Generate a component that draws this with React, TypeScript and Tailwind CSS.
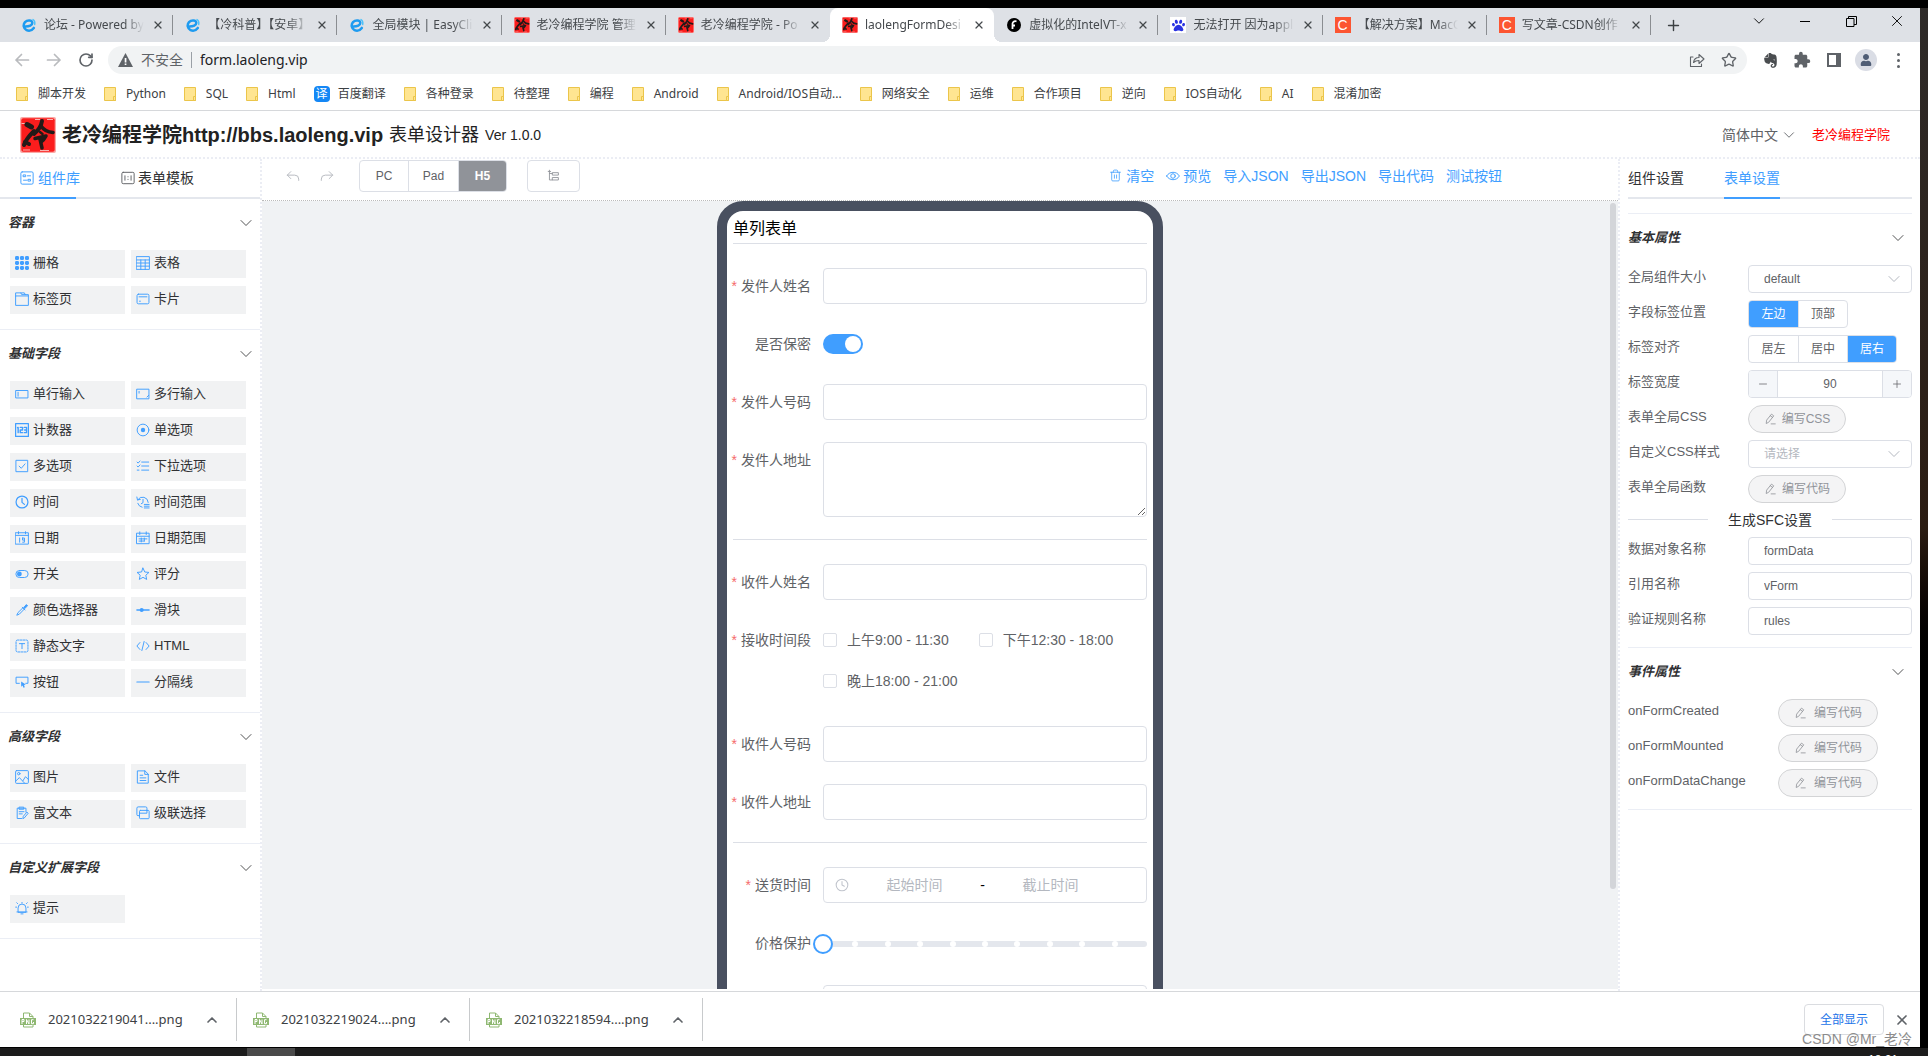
import React from 'react';
import {
  ChevronDown,
  ChevronUp,
  X,
  Plus,
  Minus,
  RotateCw,
  Star,
  Clock,
  Trash2,
} from 'lucide-react';
import { FaUser, FaEvernote, FaPaw } from 'react-icons/fa';
import { MdExtension } from 'react-icons/md';

// ==========================================
// ICONS
// ==========================================
const Svg = ({ size = 14, className = '', children }: { size?: number; className?: string; children: React.ReactNode }) => (
  <svg
    width={size}
    height={size}
    viewBox="0 0 16 16"
    fill="none"
    stroke="currentColor"
    strokeWidth="1.1"
    strokeLinecap="round"
    strokeLinejoin="round"
    className={`shrink-0 ${className}`}
    aria-hidden="true"
  >
    {children}
  </svg>
);

const widgetIcons: Record<string, React.ReactNode> = {
  grid: (
    <g fill="currentColor" stroke="none">
      {[0, 5.7, 11.4].map((y) =>
        [0, 5.7, 11.4].map((x) => <rect key={`${x}-${y}`} x={x} y={y} width="4.6" height="4.6" rx="1.6" />)
      )}
    </g>
  ),
  table: <path d="M.7.7h14.6v14.6H.7zM.7 4.5h14.6M.7 8h14.6M.7 11.6h14.6M5.5 4.5v10.8M10.5 4.5v10.8" />,
  tab: <path d="M.7 4.5V1h6l1 2h7.6v12.3H.7V4.5h14.6M6.7 1h4l1 2" />,
  card: (
    <>
      <rect x="1.2" y="2.5" width="13.6" height="11" rx="1.5" />
      <path d="M3.5 5.5h9M4 10.5h1" />
    </>
  ),
  input: <path d="M1.2 4h13.6v8.5H1.2zM3.5 6v4.5" />,
  textarea: <path d="M1.2 2.5h13.6v11H1.2zM3.5 5v2M12.5 11.5l2-2" />,
  number: (
    <>
      <path d="M.7.7h14.6v14.6H.7z" strokeWidth="1.4" />
      <path d="M3.6 5v6M2.9 5.4l.7-.4M6 5h2.6v3H6v3h2.6M10.6 5h2.6v6h-2.6M11 8h2" strokeWidth="1.6" />
    </>
  ),
  radio: (
    <>
      <circle cx="8" cy="8" r="6.7" />
      <circle cx="8" cy="8" r="2.5" fill="currentColor" stroke="none" />
    </>
  ),
  checkbox: <path d="M1.5 1.5h13v13h-13zM4.7 8.2l2.5 2.4 4.3-5" />,
  select: <path d="M6.5 3.5h8M6.5 8h8M6.5 12.7h8M1.2 3.5l1.2 1.2 2.2-2.4M1.2 8l1.2 1.2 2.2-2.4M1.4 12.7h2" />,
  time: (
    <>
      <circle cx="8" cy="8" r="6.8" strokeWidth="1.4" />
      <path d="M8 3.8V8.4l2.8 2.3" strokeWidth="1.4" />
    </>
  ),
  timeRange: <path d="M2 5.5A6.5 6.5 0 0 1 14 8.5M1 2.3l.7 3.4L5 5M2 9.5A6.5 6.5 0 0 0 7 14M8 5v3.8L6 10M9.5 10.8h5.5M9.5 12.8h5.5M9.5 14.8h5.5" />,
  date: <path d="M.7 2h14.6v13H.7zM.7 5h14.6M4 .8v2.4M12 .8v2.4M5.3 8v4.8M8.6 8h2.2v4.8H8.8M8.6 8v2.4h2.2" />,
  dateRange: <path d="M1 2.5h14v12H1zM1 6h14M4.3 1v3M11.7 1v3M3.5 9h9M3.5 11.5h6M6 8v4.5M9.5 8v3.5" />,
  switch: (
    <>
      <rect x="1" y="4" width="14" height="8" rx="4" />
      <circle cx="5" cy="8" r="2.8" fill="currentColor" stroke="none" />
    </>
  ),
  rate: <path d="M8 1.3l2 4.4 4.8.5-3.6 3.2 1 4.8L8 11.8l-4.2 2.4 1-4.8L1.2 6.2 6 5.7z" />,
  color: (
    <>
      <path d="M9 5.5L3.4 11 2 14l3-1.3L10.6 7" />
      <path d="M8.3 4.8l3.2 3.2M10 5.2l3-3.4 1.4 1.4L11 6.4z" fill="currentColor" />
    </>
  ),
  slider: (
    <>
      <path d="M1 8h14" strokeWidth="1.5" />
      <circle cx="6.5" cy="8" r="2.3" fill="currentColor" stroke="none" />
    </>
  ),
  text: (
    <>
      <rect x="1.2" y="1.2" width="13.6" height="13.6" rx="1.5" strokeDasharray="2 1.3" />
      <path d="M5 5.3h6M8 5.3V11" />
    </>
  ),
  html: <path d="M4.5 4L1 8l3.5 4M11.5 4L15 8l-3.5 4M9.3 2.8L6.7 13.2" />,
  button: (
    <>
      <path d="M5 9.5H1.2v-7h13.6v7h-2.5" />
      <path d="M7 7.5l5.3 3.3-2 .6.9 2.6-1.5.6-1-2.6-1.6 1.3z" fill="currentColor" stroke="none" />
    </>
  ),
  divider: <path d="M1 8h14" strokeWidth="1.3" />,
  picture: (
    <>
      <rect x=".7" y=".7" width="14.6" height="14.6" rx="1" />
      <circle cx="4.3" cy="4.2" r="1.4" />
      <path d="M1 12.5l4-3.8 3.8 4L12 7.6l3.3 3.3M9 13l2 2" />
    </>
  ),
  file: <path d="M2 1h8.3L14 4.7V15H2zM10 1v4h4M4.7 6h3M4.7 9h6.6M4.7 12h6.6" />,
  rich: <path d="M12.5 7V2.5h-10v11.8h5M5 1.3h5v2.4H5zM4.8 6.5h5.5M4.8 9h3.5M9 14l.5-2.3L13.6 7l1.5 1.3-4.2 5z" />,
  cascade: (
    <>
      <path d="M4 11H2.2A1.2 1.2 0 0 1 1 9.8V2.5A1.5 1.5 0 0 1 2.5 1h8.5A1.5 1.5 0 0 1 12.5 2.5V5" />
      <rect x="4" y="5" width="11" height="9.5" rx="1" />
      <path d="M4 8.2h8.5V5" />
    </>
  ),
  alert: <path d="M3.5 12.5V8a4.5 4.5 0 0 1 9 0v4.5zM2.2 12.5h11.6M6.8 14.7h2.4M8 1.6v.8M.8 7h1M14.2 7h1M2 2l1 1M14 2l-1 1" />,
};

const PenIcon = () => (
  <Svg size={12}>
    <path d="M3 13.5l.5-4L10 1.5l3 2.3-6.5 8.2zM8.3 3.5l3 2.3M9.5 14.5h5.5" />
  </Svg>
);

const SealIcon = ({ size = 16 }: { size?: number }) => (
  <svg width={size} height={size} viewBox="0 0 36 36" aria-hidden="true" className="shrink-0">
    <rect width="36" height="36" rx="2" fill="#f9a9a6" />
    <rect x="1.3" y="1.3" width="33.4" height="33.4" rx="2" fill="#fb1d1d" />
    <path d="M1.5 6.5h5M15 2.5h5M27 2.5h6M3 33h7M20 33.5h9" stroke="#f9b5b2" strokeWidth="1" />
    <g stroke="#241a18" fill="none" strokeLinecap="round" strokeLinejoin="round">
      <path d="M7 7.5l4.5 2.5" strokeWidth="5" />
      <path d="M4 28Q6 22 14 14" strokeWidth="4" />
      <path d="M5 25l4 2" strokeWidth="4" />
      <path d="M22 4Q21 11 14 17" strokeWidth="4" />
      <path d="M21 9q4 6 12 6.5" strokeWidth="3.5" />
      <path d="M20 15l2.500 2" strokeWidth="2.500" />
      <path d="M15 21.500l11-2.500q-2 4-5 6" strokeWidth="3.500" />
      <path d="M20 22l2 9" strokeWidth="3.500" />
    </g>
  </svg>
);

const SwirlIcon = () => (
  <svg width="16" height="16" viewBox="0 0 16 16" fill="none" strokeLinecap="round" aria-hidden="true" className="shrink-0">
    <path d="M4.5 9.5C8 9.5 11.5 8.3 11.3 5.7 11 3 6.5 2.5 4 5.2c-2.2 2.4-1.5 6.600 1.500 7.900 2.700 1.100 5.700 0 7.300-2.200" stroke="#1e9bf0" strokeWidth="2.5" />
    <path d="M12 2.500c1.500 1 2.200 3 1.700 5" stroke="#4dc3fa" strokeWidth="1.4" />
  </svg>
);

const TabIcon = ({ kind }: { kind: string }) => {
  if (kind === 'swirl') return <SwirlIcon />;
  if (kind === 'seal') return <SealIcon />;
  if (kind === 'baidu')
    return (
      <span className="flex size-4 shrink-0 items-center justify-center bg-white text-[#2932e1]">
        <FaPaw size={13} />
      </span>
    );
  if (kind === 'csdn')
    return (
      <span className="flex size-4 shrink-0 items-center justify-center bg-[#fc5531] font-['Liberation_Sans'] text-sm leading-4 text-white">C</span>
    );
  return (
    <svg width="16" height="16" viewBox="0 0 16 16" className="shrink-0" aria-hidden="true">
      <circle cx="8" cy="8" r="7" fill="#000" />
      <path d="M6.500 12V8.500H9M6.500 8.500C6 5 8 3.800 10.500 4.300" stroke="#fff" strokeWidth="1.8" fill="none" />
    </svg>
  );
};

const FolderIcon = () => (
  <svg width="12" height="14" viewBox="0 0 12 14" aria-hidden="true" className="shrink-0">
    <path d="M.5.5h11v13H.5z" fill="#ffe591" stroke="#ebc54a" />
    <path d="M9.5 9.5h2v4h-2z" fill="#ffe591" stroke="#ebc54a" />
  </svg>
);

// ==========================================
// DATA
// ==========================================
const browserTabs = [
  { title: '论坛 - Powered by', icon: 'swirl' },
  { title: '【冷科普】【安卓】', icon: 'swirl' },
  { title: '全局模块 | EasyClic', icon: 'swirl' },
  { title: '老冷编程学院 管理', icon: 'seal' },
  { title: '老冷编程学院 - Po', icon: 'seal' },
  { title: 'laolengFormDesi', icon: 'seal', active: true },
  { title: '虚拟化的IntelVT-x', icon: 'disc' },
  { title: '无法打开 因为appl', icon: 'baidu' },
  { title: '【解决方案】MacO', icon: 'csdn' },
  { title: '写文章-CSDN创作', icon: 'csdn' },
];

const bookmarks = [
  '脚本开发', 'Python', 'SQL', 'Html', '百度翻译', '各种登录', '待整理', '编程', 'Android',
  'Android/IOS自动...', '网络安全', '运维', '合作项目', '逆向', 'IOS自动化', 'AI', '混淆加密',
];

const widgetGroups: { title: string; items: [string, string][] }[] = [
  { title: '容器', items: [['grid', '栅格'], ['table', '表格'], ['tab', '标签页'], ['card', '卡片']] },
  {
    title: '基础字段',
    items: [
      ['input', '单行输入'], ['textarea', '多行输入'],
      ['number', '计数器'], ['radio', '单选项'],
      ['checkbox', '多选项'], ['select', '下拉选项'],
      ['time', '时间'], ['timeRange', '时间范围'],
      ['date', '日期'], ['dateRange', '日期范围'],
      ['switch', '开关'], ['rate', '评分'],
      ['color', '颜色选择器'], ['slider', '滑块'],
      ['text', '静态文字'], ['html', 'HTML'],
      ['button', '按钮'], ['divider', '分隔线'],
    ],
  },
  { title: '高级字段', items: [['picture', '图片'], ['file', '文件'], ['rich', '富文本'], ['cascade', '级联选择']] },
  { title: '自定义扩展字段', items: [['alert', '提示']] },
];

const downloads = ['2021032219041....png', '2021032219024....png', '2021032218594....png'];

// ==========================================
// BROWSER CHROME
// ==========================================
function TabStrip() {
  return (
    <div className="flex h-[34px] items-stretch bg-[#dee1e6] pl-[9px] text-xs text-[#45494d]">
      <div className="flex w-[1642px] min-w-0">
        {browserTabs.map((tab, i) => {
          const bare = tab.active || browserTabs[i + 1]?.active;
          return (
            <div
              key={tab.title}
              className={
                tab.active
                  ? 'relative flex min-w-0 flex-1 items-center rounded-t-lg bg-white pl-3 before:absolute before:bottom-0 before:-left-2 before:size-2 before:bg-[radial-gradient(circle_at_0_0,transparent_8px,white_8px)] after:absolute after:-right-2 after:bottom-0 after:size-2 after:bg-[radial-gradient(circle_at_100%_0,transparent_8px,white_8px)]'
                  : 'flex min-w-0 flex-1 items-center pl-3'
              }
            >
              <TabIcon kind={tab.icon} />
              <span className="ml-[7px] min-w-0 flex-1 whitespace-nowrap [mask-image:linear-gradient(to_right,black_80%,transparent)]">
                {tab.title}
              </span>
              <button aria-label="关闭标签页" className="ml-1.5 flex w-4 justify-center">
                <X size={12} strokeWidth={2.5} />
              </button>
              <span className={bare ? 'ml-1.5 w-px' : 'ml-1.5 h-5 w-px bg-[#8a8d91]'} />
            </div>
          );
        })}
      </div>
      <button aria-label="新标签页" className="ml-3.5 flex items-center text-[#3c4043]">
        <Plus size={17} strokeWidth={2} />
      </button>
      <div className="ml-auto flex w-[184px] items-center pb-2 text-black">
        <button aria-label="搜索标签页" className="flex flex-1 justify-center"><ChevronDown size={18} strokeWidth={1.2} /></button>
        <button aria-label="最小化" className="flex flex-1 justify-center"><span className="h-px w-2.5 bg-black" /></button>
        <button aria-label="还原" className="flex flex-1 justify-center">
          <svg width="11" height="11" viewBox="0 0 11 11" fill="none" stroke="currentColor"><path d="M.5 2.5h7.5v8H.5zM2.5 2.5v-2h8v8H8" /></svg>
        </button>
        <button aria-label="关闭" className="flex flex-1 justify-center"><X size={18} strokeWidth={1.2} /></button>
      </div>
    </div>
  );
}

const ToolCell = ({ children }: { children: React.ReactNode }) => (
  <span className="flex w-8 items-center justify-center">{children}</span>
);

function AddressBar() {
  return (
    <div className="flex h-9 items-center bg-white pr-1.5 pl-3.5 text-[#5f6368]">
      <button aria-label="后退" className="w-8 text-[#b9bbbe]">
        <Svg size={16}><path d="M14.5 8H2M7.5 2.5L2 8l5.5 5.5" strokeWidth="1.7" /></Svg>
      </button>
      <button aria-label="前进" className="w-8 text-[#b9bbbe]">
        <Svg size={16}><path d="M1.5 8H14M8.5 2.5L14 8l-5.5 5.5" strokeWidth="1.7" /></Svg>
      </button>
      <button aria-label="重新加载" className="w-[30px]"><RotateCw size={16} strokeWidth={2.5} /></button>
      <div className="flex h-7 flex-1 items-center rounded-full bg-[#f1f3f4] pr-2.5 pl-2.5 text-sm">
        <svg width="15" height="14" viewBox="0 0 15 14" aria-hidden="true">
          <path d="M7.5 0L15 14H0z" fill="#5f6368" />
          <path d="M6.7 5h1.7v4.5H6.7zM6.7 10.5h1.7v1.6H6.7z" fill="#fff" />
        </svg>
        <span className="ml-2">不安全</span>
        <span className="mx-2 h-4 w-px bg-[#9aa0a6]" />
        <input aria-label="地址" defaultValue="form.laoleng.vip" className="flex-1 bg-transparent text-[#202124] outline-none" />
        <button aria-label="分享" className="mr-4">
          <Svg size={16}><path d="M4 5H1.5v9.5h11V12M4.5 10.5C5 7 7 5.500 10 5.500V2.500l5 4.500-5 4.500V8.500C7.500 8.500 6 9 4.500 10.500z" /></Svg>
        </button>
        <button aria-label="收藏"><Star size={16} /></button>
      </div>
      <div className="ml-[7px] flex items-center">
        <ToolCell><FaEvernote size={17} className="text-[#4a4d50]" /></ToolCell>
        <ToolCell><MdExtension size={18} /></ToolCell>
        <ToolCell>
          <svg width="16" height="16" viewBox="0 0 16 16" aria-hidden="true"><path d="M2 2h12v12H2z" fill="none" stroke="currentColor" strokeWidth="2" /><path d="M10 2h5v12h-5z" fill="currentColor" /></svg>
        </ToolCell>
        <ToolCell>
          <span className="flex size-[22px] items-center justify-center rounded-full bg-[#dadde5] text-[#4f5d75]"><FaUser size={12} /></span>
        </ToolCell>
        <button aria-label="菜单" className="flex w-8 flex-col items-center gap-[3px]">
          <span className="size-[3px] rounded-full bg-[#5f6368]" />
          <span className="size-[3px] rounded-full bg-[#5f6368]" />
          <span className="size-[3px] rounded-full bg-[#5f6368]" />
        </button>
      </div>
    </div>
  );
}

function BookmarkBar() {
  return (
    <nav className="flex h-[33px] items-center gap-[18px] border-b border-[#d6d8db] bg-white pb-px pl-4 text-xs text-[#3c4043]">
      {bookmarks.map((name) =>
        name === '百度翻译' ? (
          <a key={name} href="#" className="flex items-center gap-2 whitespace-nowrap">
            <span className="flex size-4 items-center justify-center rounded-sm bg-[#1487f5] leading-4 text-white">译</span>
            {name}
          </a>
        ) : (
          <a key={name} href="#" className="flex items-center gap-2.5 whitespace-nowrap">
            <FolderIcon />
            {name}
          </a>
        )
      )}
    </nav>
  );
}

function DownloadBar() {
  return (
    <div className="flex h-14 shrink-0 items-center border-t border-[#d6d8db] bg-white pr-2.5 pl-1 text-[13px] text-[#3c4043]">
      {downloads.map((name) => (
        <div key={name} className="flex h-[43px] w-[233px] items-center border-r border-[#c8cacc] pl-4">
          <svg width="16" height="16" viewBox="0 0 16 16" aria-hidden="true" className="shrink-0">
            <path d="M3.5 6V1h6l3.5 3.5V6M3.5 12v3h9.5v-3M9.5 1v3.5H13" fill="#fff" stroke="#8fb872" />
            <rect x="0" y="6" width="16" height="7" fill="#8fb872" />
            <path d="M2 12V7.5h2v2H2M6.5 12V7.5L9 12V7.5M13.5 7.7h-2v4h2V10" stroke="#fff" fill="none" />
          </svg>
          <span className="ml-3 flex-1">{name}</span>
          <button aria-label="更多" className="mr-4"><ChevronUp size={16} strokeWidth={2.5} className="text-[#5f6368]" /></button>
        </div>
      ))}
      <button className="ml-auto h-[31px] w-20 rounded border border-[#dadce0] text-xs text-[#1a73e8]">全部显示</button>
      <button aria-label="关闭" className="ml-2.5"><X size={16} strokeWidth={2.5} className="text-[#5f6368]" /></button>
    </div>
  );
}

// ==========================================
// FORM DESIGNER
// ==========================================
function Header() {
  return (
    <header className="flex h-12 shrink-0 items-center border-b-2 border-dotted border-[#ebedf4] pt-0.5 pr-[30px] pl-5">
      <SealIcon size={36} />
      <h1 className="ml-1.5 flex items-center text-[#222]">
        <span className="text-xl font-bold">老冷编程学院http://bbs.laoleng.vip</span>
        <span className="ml-1.5 text-lg">表单设计器</span>
        <span className="ml-1.5 text-sm">Ver 1.0.0</span>
      </h1>
      <button className="ml-auto flex items-center gap-0.5 text-sm text-[#606266]">
        简体中文 <ChevronDown size={18} strokeWidth={1.2} />
      </button>
      <a href="#" className="ml-3.5 text-[13px] text-[#f00]">老冷编程学院</a>
    </header>
  );
}

function SectionTitle({ title }: { title: string }) {
  return (
    <button className="flex h-12 w-full items-center justify-between pr-1 text-[13px] font-bold text-[#303133] italic">
      {title}
      <ChevronDown size={20} strokeWidth={1} className="text-[#303133]" />
    </button>
  );
}

function WidgetPanel() {
  return (
    <aside className="w-[262px] shrink-0 border-r-2 border-dotted border-[#ebedf4] bg-white">
      <div className="flex h-10 gap-[45px] border-b-2 border-[#e4e7ed] pl-5 text-sm text-[#303133]">
        <button className="-mb-0.5 flex w-14 items-center gap-1 border-b-2 border-[#409eff] whitespace-nowrap text-[#409eff]">
          <Svg><rect x="1" y="1" width="14" height="14" rx="1.5" /><path d="M4 4.5h2.5v2H4zM8.5 5.5h3.5M4 10.5h3.5M9.5 9.5h2.5v2H9.5z" /></Svg>
          组件库
        </button>
        <button className="flex items-center gap-[3px]">
          <Svg className="text-[#606266]"><rect x="1" y="1.5" width="14" height="13" rx="1.5" /><path d="M4.5 5.5v5M11.5 5.5v5M8 6.5v.2M8 9.5v.2" /></Svg>
          表单模板
        </button>
      </div>
      {widgetGroups.map((group) => (
        <section key={group.title} className="border-b border-[#ebeef5] pb-[15px] pl-2">
          <SectionTitle title={group.title} />
          <ul className="grid grid-cols-[115px_115px] gap-x-1.5 gap-y-2 pt-[3px] pl-0.5">
            {group.items.map(([icon, label]) => (
              <li key={label} className="flex h-7 items-center gap-1 bg-[#f1f2f3] pb-0.5 pl-[5px] text-[13px] text-[#303133]">
                <Svg className="text-[#409eff]">{widgetIcons[icon]}</Svg>
                {label}
              </li>
            ))}
          </ul>
        </section>
      ))}
    </aside>
  );
}

function CanvasToolbar() {
  return (
    <div className="flex h-[42px] shrink-0 items-center border-b border-dotted border-[#bbb] bg-white pr-[116px] pb-2 pl-[23px]">
      <button aria-label="撤销" className="w-[34px] pl-px text-[#b6b9c0]">
        <Svg><path d="M5.5 3L1.5 7l4 4M1.5 7H10a4.5 4.5 0 0 1 4.5 4.5V13" /></Svg>
      </button>
      <button aria-label="重做" className="w-10 pl-px text-[#b6b9c0]">
        <Svg><path d="M10.5 3l4 4-4 4M14.5 7H6a4.5 4.5 0 0 0-4.5 4.5V13" /></Svg>
      </button>
      <div className="flex h-8 overflow-hidden rounded border border-[#dcdfe6] text-xs font-medium text-[#606266]">
        <button className="w-12">PC</button>
        <button className="w-[51px] border-x border-[#dcdfe6]">Pad</button>
        <button className="w-[47px] bg-[#909399] font-bold text-white">H5</button>
      </div>
      <button aria-label="组件树" className="ml-5 flex h-8 w-[53px] items-center justify-center rounded border border-[#dcdfe6] text-[#909399]">
        <Svg size={13}><path d="M3 1.5v12h3.5M3 5.5h3.5M1.5 3h3M7 4.5h7v3H7zM7 10.5h7v3H7z" /></Svg>
      </button>
      <div className="ml-auto flex items-center gap-3 text-sm text-[#409eff]">
        <button className="flex items-center gap-1"><Trash2 size={13} strokeWidth={1.5} />清空</button>
        <button className="flex items-center gap-[3px]">
          <Svg><path d="M.7 8C4 2.3 12 2.3 15.3 8 12 13.7 4 13.7.7 8z" /><circle cx="8" cy="8" r="2.6" /></Svg>
          预览
        </button>
        <button>导入JSON</button>
        <button>导出JSON</button>
        <button>导出代码</button>
        <button>测试按钮</button>
      </div>
    </div>
  );
}

interface FieldProps {
  label: string;
  id: string;
  required?: boolean;
  className?: string;
  children: React.ReactNode;
}

const FormField = ({ label, id, required, className = 'min-h-9', children }: FieldProps) => (
  <div className={`mb-[22px] flex items-start ${className}`}>
    <label htmlFor={id} className="flex h-9 w-[90px] shrink-0 items-center justify-end pr-3 whitespace-nowrap">
      {required && <span className="mr-1 text-[#f56c6c]">*</span>}
      {label}
    </label>
    <div className="min-w-0 flex-1">{children}</div>
  </div>
);

const TextField = ({ label, id }: { label: string; id: string }) => (
  <FormField label={label} id={id} required>
    <input id={id} className="block h-9 w-full rounded border border-[#dcdfe6] px-3.5 outline-none" />
  </FormField>
);

const Rule = () => <hr className="mb-6 border-[#dcdfe6]" />;

function PhoneForm() {
  return (
    <div className="mx-auto min-h-[900px] w-[446px] rounded-t-[26px] border-10 border-[#495060] bg-white px-1.5 text-sm text-[#606266]">
      <h2 className="mb-6 border-b border-[#dcdfe6] pt-1.5 pb-0.5 text-base text-black">单列表单</h2>
      <TextField label="发件人姓名" id="sender-name" />
      <FormField label="是否保密" id="secret">
        <span className="flex h-9 items-center">
          <input
            id="secret"
            type="checkbox"
            role="switch"
            defaultChecked
            className="flex h-5 w-10 appearance-none items-center justify-end rounded-full bg-[#409eff] px-0.5 before:size-4 before:rounded-full before:bg-white"
          />
        </span>
      </FormField>
      <TextField label="发件人号码" id="sender-phone" />
      <FormField label="发件人地址" id="sender-address" required>
        <textarea id="sender-address" className="block h-[75px] w-full rounded border border-[#dcdfe6] px-3.5 outline-none" />
      </FormField>
      <Rule />
      <TextField label="收件人姓名" id="receiver-name" />
      <FormField label="接收时间段" id="slot-0" required>
        <div className="flex flex-wrap gap-x-[30px] gap-y-[5px] pb-[5px]">
          {['上午9:00 - 11:30', '下午12:30 - 18:00', '晚上18:00 - 21:00'].map((slot, i) => (
            <label key={slot} className="flex h-9 items-center gap-2.5">
              <input id={`slot-${i}`} type="checkbox" className="size-3.5 appearance-none rounded-xs border border-[#dcdfe6] bg-white" />
              {slot}
            </label>
          ))}
        </div>
      </FormField>
      <TextField label="收件人号码" id="receiver-phone" />
      <TextField label="收件人地址" id="receiver-address" />
      <Rule />
      <FormField label="送货时间" id="time-start" required>
        <div className="flex h-9 items-center rounded border border-[#dcdfe6] pr-[30px] pl-[11px]">
          <Clock size={14} strokeWidth={1.8} className="shrink-0 text-[#c0c4cc]" />
          <input id="time-start" placeholder="起始时间" className="w-0 flex-1 text-center outline-none placeholder:text-[#b4b8c0]" />
          <span className="text-black">-</span>
          <input aria-label="截止时间" placeholder="截止时间" className="w-0 flex-1 text-center outline-none placeholder:text-[#b4b8c0]" />
        </div>
      </FormField>
      <FormField label="价格保护" id="price" className="h-[38px]">
        <div className="relative flex h-[38px] items-center">
          <div className="relative h-1.5 w-full rounded-full bg-[#e4e7ed]">
            {[1, 2, 3, 4, 5, 6, 7, 8, 9].map((n) => (
              <span key={n} className="absolute -ml-[3px] size-1.5 rounded-full bg-white" style={{ left: `${n * 10}%` }} />
            ))}
          </div>
          <input
            id="price"
            type="range"
            defaultValue={0}
            className="absolute -left-2.5 w-[calc(100%+20px)] appearance-none bg-transparent [&::-webkit-slider-thumb]:size-5 [&::-webkit-slider-thumb]:appearance-none [&::-webkit-slider-thumb]:rounded-full [&::-webkit-slider-thumb]:border-2 [&::-webkit-slider-thumb]:border-solid [&::-webkit-slider-thumb]:border-[#409eff] [&::-webkit-slider-thumb]:bg-white"
          />
        </div>
      </FormField>
      <FormField label="" id="remark">
        <input id="remark" aria-label="备注" className="block h-9 w-full rounded border border-[#dcdfe6] px-3.5" />
      </FormField>
    </div>
  );
}

const SettingRow = ({ label, id, children }: { label: string; id?: string; children: React.ReactNode }) => (
  <div className="mb-[7px] flex items-start">
    <label htmlFor={id} className="h-6 w-[120px] shrink-0 text-[13px] leading-6 whitespace-nowrap">{label}</label>
    {children}
  </div>
);

const SettingSelect = ({ id, value, muted }: { id: string; value: string; muted?: boolean }) => (
  <div className="relative flex-1">
    <select
      id={id}
      className={
        muted
          ? 'block h-7 w-full appearance-none rounded border border-[#dcdfe6] bg-white px-[15px] text-xs text-[#b4b8c0]'
          : 'block h-7 w-full appearance-none rounded border border-[#dcdfe6] bg-white px-[15px] text-xs text-[#606266]'
      }
    >
      <option>{value}</option>
    </select>
    <ChevronDown size={20} strokeWidth={1.2} className="pointer-events-none absolute top-1 right-2 text-[#b4b8c0]" />
  </div>
);

const SettingInput = ({ label, id, value }: { label: string; id: string; value: string }) => (
  <SettingRow label={label} id={id}>
    <input id={id} defaultValue={value} className="h-7 w-0 flex-1 rounded border border-[#dcdfe6] px-[15px] text-xs outline-none" />
  </SettingRow>
);

const RadioGroup = ({ name, options, active }: { name: string; options: string[]; active: string }) => (
  <div className="flex h-7 overflow-hidden rounded border border-[#dcdfe6] text-xs">
    {options.map((option) => (
      <label
        key={option}
        className="flex w-[49px] items-center justify-center border-l border-[#dcdfe6] first:border-l-0 has-checked:bg-[#409eff] has-checked:text-white"
      >
        <input type="radio" name={name} defaultChecked={option === active} className="sr-only" />
        {option}
      </label>
    ))}
  </div>
);

const CodeButton = ({ text, wide }: { text: string; wide?: boolean }) => (
  <button
    className={
      wide
        ? 'flex h-7 w-[100px] items-center justify-center gap-2 rounded-full border border-[#d3d4d6] bg-[#f4f4f5] text-xs text-[#909399]'
        : 'flex h-7 w-[98px] items-center justify-center gap-1.5 rounded-full border border-[#d3d4d6] bg-[#f4f4f5] text-xs text-[#909399]'
    }
  >
    <PenIcon />
    {text}
  </button>
);

function SettingPanel() {
  return (
    <aside className="w-[302px] shrink-0 border-l-2 border-dotted border-[#ebedf4] bg-white px-2 text-[#606266]">
      <div className="mb-3.5 flex h-10 gap-10 border-b-2 border-[#e4e7ed] text-sm text-[#303133]">
        <button>组件设置</button>
        <button className="-mb-0.5 border-b-2 border-[#409eff] text-[#409eff]">表单设置</button>
      </div>
      <section className="border-y border-[#ebeef5] pb-[5px]">
        <SectionTitle title="基本属性" />
        <div className="pt-[3px]">
          <SettingRow label="全局组件大小" id="size"><SettingSelect id="size" value="default" /></SettingRow>
          <SettingRow label="字段标签位置"><RadioGroup name="pos" options={['左边', '顶部']} active="左边" /></SettingRow>
          <SettingRow label="标签对齐"><RadioGroup name="align" options={['居左', '居中', '居右']} active="居右" /></SettingRow>
          <SettingRow label="标签宽度" id="label-width">
            <div className="flex h-7 flex-1 overflow-hidden rounded border border-[#dcdfe6]">
              <button aria-label="减少" className="flex w-[29px] items-center justify-center border-r border-[#dcdfe6] bg-[#f5f7fa]"><Minus size={12} strokeWidth={1.5} /></button>
              <input id="label-width" defaultValue="90" className="w-0 flex-1 text-center text-xs outline-none" />
              <button aria-label="增加" className="flex w-[29px] items-center justify-center border-l border-[#dcdfe6] bg-[#f5f7fa]"><Plus size={12} strokeWidth={1.5} /></button>
            </div>
          </SettingRow>
          <SettingRow label="表单全局CSS"><CodeButton text="编写CSS" /></SettingRow>
          <SettingRow label="自定义CSS样式" id="css-class"><SettingSelect id="css-class" value="请选择" muted /></SettingRow>
          <SettingRow label="表单全局函数"><CodeButton text="编写代码" /></SettingRow>
          <div className="flex h-[27px] items-center gap-5 pb-2 text-sm text-[#303133]">
            <span className="h-px flex-1 bg-[#dcdfe6]" />
            生成SFC设置
            <span className="h-px flex-1 bg-[#dcdfe6]" />
          </div>
          <SettingInput label="数据对象名称" id="model" value="formData" />
          <SettingInput label="引用名称" id="ref" value="vForm" />
          <SettingInput label="验证规则名称" id="rules" value="rules" />
        </div>
      </section>
      <section className="border-b border-[#ebeef5] pb-[5px]">
        <SectionTitle title="事件属性" />
        <div className="pt-[3px]">
          {['onFormCreated', 'onFormMounted', 'onFormDataChange'].map((name) => (
            <div key={name} className="mb-[7px] flex items-start">
              <span className="w-[150px] text-[13px] leading-6">{name}</span>
              <CodeButton text="编写代码" wide />
            </div>
          ))}
        </div>
      </section>
    </aside>
  );
}

export default function App() {
  return (
    <div className="flex h-screen flex-col overflow-hidden bg-linear-to-b from-[#2e2b29] via-[#2b1c12] via-50% to-black to-65% font-['Liberation_Sans','Noto_Sans_CJK_SC',sans-serif]">
      <div className="h-2 shrink-0 bg-black" />
      <div className="relative mr-2 flex min-h-0 flex-1 flex-col bg-white">
        <div className="shrink-0 font-['Noto_Sans','Noto_Sans_CJK_SC',sans-serif]">
          <TabStrip />
          <AddressBar />
          <BookmarkBar />
        </div>
        <Header />
        <main className="flex min-h-0 flex-1">
          <WidgetPanel />
          <div className="flex min-w-0 flex-1 flex-col pb-0.5">
            <CanvasToolbar />
            <div className="relative min-h-0 flex-1 overflow-hidden bg-[#f0f2f4]">
              <PhoneForm />
              <span className="absolute top-0.5 right-0.5 h-[87%] w-1.5 rounded-full bg-[#d3d5d9]" />
            </div>
          </div>
          <SettingPanel />
        </main>
        <div className="font-['Noto_Sans','Noto_Sans_CJK_SC',sans-serif]">
          <DownloadBar />
        </div>
        <span className="absolute right-2 bottom-0 text-sm leading-4 text-[#8c8c8c]">CSDN @Mr_老冷</span>
      </div>
      <footer className="flex h-[9px] shrink-0 items-start overflow-hidden border-t border-black bg-[#1c1c1c] pr-[30px] pl-[247px]">
        <span className="h-2 w-12 bg-[#4a4a4a]" />
        <span className="ml-auto pt-1 text-xs text-white">18:21</span>
      </footer>
    </div>
  );
}
